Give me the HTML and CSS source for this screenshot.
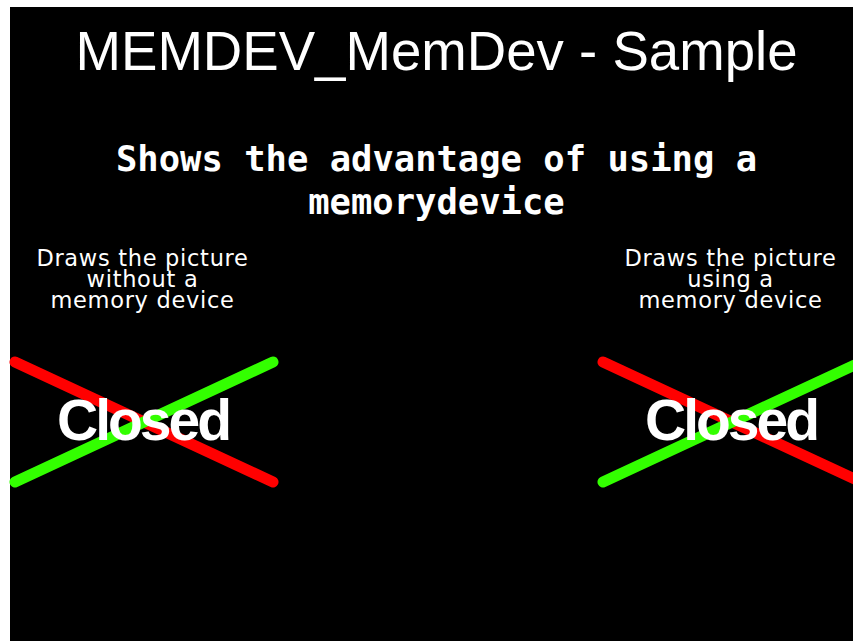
FILE: index.html
```html
<!DOCTYPE html>
<html lang="en">
<head>
<meta charset="utf-8">
<title>MEMDEV_MemDev - Sample</title>
<link rel="stylesheet" href="styles.css">
</head>
<body>
<div class="screen">
  <h1 class="title">MEMDEV_MemDev - Sample</h1>
  <p class="subtitle">Shows the advantage of using a<br>memorydevice</p>
  <div class="demos">
    <section class="demo">
      <p class="label">Draws the picture<br>without a<br>memory device</p>
      <svg class="pic" width="265" height="140" viewBox="0 0 265 140">
        <line class="red" x1="5" y1="10" x2="263" y2="130"/>
        <line class="green" x1="5" y1="130" x2="263" y2="10"/>
        <text class="closed" x="133" y="88" text-anchor="middle">Closed</text>
      </svg>
    </section>
    <section class="demo">
      <p class="label">Draws the picture<br>using a<br>memory device</p>
      <svg class="pic" width="265" height="140" viewBox="0 0 265 140">
        <line class="red" x1="5" y1="10" x2="263" y2="130"/>
        <line class="green" x1="5" y1="130" x2="263" y2="10"/>
        <text class="closed" x="133" y="88" text-anchor="middle">Closed</text>
      </svg>
    </section>
  </div>
</div>
</body>
</html>
```

FILE: styles.css
```css
html, body {
  margin: 0;
  padding: 0;
  background: #fff;
  overflow: hidden;
}

.screen {
  margin: 7px 0 0 10px;
  width: 853px;
  height: 640px;
  background: #000;
  color: #fff;
  display: flex;
  flex-direction: column;
  align-items: stretch;
}

.title {
  margin: 18px 0 0;
  font-family: "Liberation Sans", Arial, sans-serif;
  font-weight: normal;
  font-size: 54.6px;
  line-height: 53px;
  text-align: center;
}

.subtitle {
  margin: 59px 0 0;
  font-family: "DejaVu Sans Mono", monospace;
  font-weight: bold;
  font-size: 35.5px;
  line-height: 43px;
  text-align: center;
}

.demos {
  margin-top: 25px;
  display: flex;
  justify-content: space-between;
}

.demo {
  width: 265px;
  display: flex;
  flex-direction: column;
  align-items: center;
}

.label {
  margin: 0;
  font-family: "DejaVu Sans", sans-serif;
  font-size: 22.5px;
  line-height: 21px;
  letter-spacing: 0.7px;
  text-align: center;
}

.pic {
  display: block;
  margin-top: 41px;
  overflow: visible;
}

.red {
  stroke: #ff0000;
  stroke-width: 11;
  stroke-linecap: round;
}

.green {
  stroke: #33ff00;
  stroke-width: 11;
  stroke-linecap: round;
}

.closed {
  fill: #fff;
  font-family: "Liberation Sans", Arial, sans-serif;
  font-weight: bold;
  font-size: 57px;
  letter-spacing: -3px;
}
```
